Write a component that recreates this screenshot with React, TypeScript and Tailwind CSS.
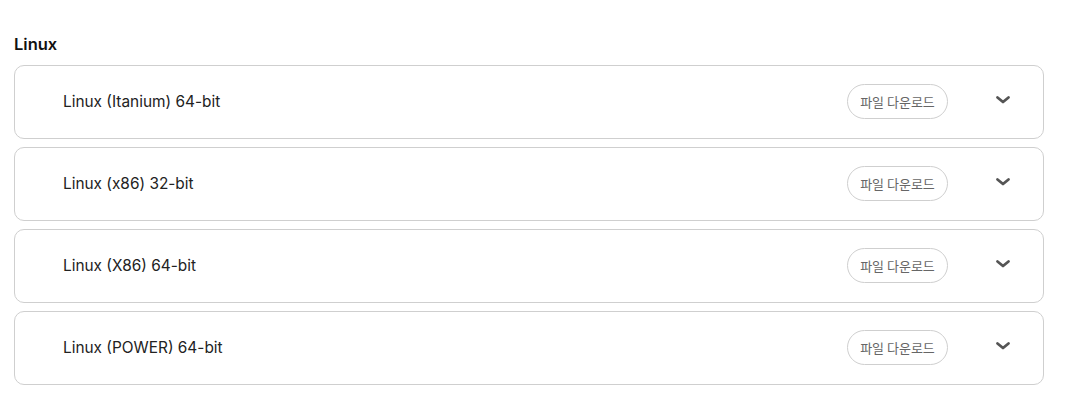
import React from "react";

const items = [
  "Linux (Itanium) 64-bit",
  "Linux (x86) 32-bit",
  "Linux (X86) 64-bit",
  "Linux (POWER) 64-bit",
];

const Chevron = () => (
  <svg width="16" height="16" viewBox="0 0 16 16" fill="none" stroke="#555" strokeWidth="2.8" strokeLinecap="round" strokeLinejoin="round">
    <path d="M2.5 5.5l5.5 4.5 5.5-4.5" />
  </svg>
);

const App = () => {
  return (
    <div className="w-[1072px] h-[407px] bg-white px-[14px] pt-[33px] font-['Inter','Noto_Sans_CJK_KR',sans-serif]">
      <h2 className="text-[16.5px] font-semibold text-[#111] leading-[22px] mb-[10px]">Linux</h2>
      <div className="flex flex-col gap-[8px] w-[1030px]">
        {items.map((name) => (
          <div
            key={name}
            className="h-[74px] border border-[#cfcfcf] rounded-[10px] flex items-center pl-[48px] pr-[32px]"
          >
            <span className="flex-1 text-[15.4px] text-[#222] leading-[20px] -mt-[1px]">{name}</span>
            <button className="h-[35px] w-[101px] rounded-full border border-[#cfcfcf] text-[13px] text-[#666] font-['Noto_Sans_CJK_KR',sans-serif] -mt-[1px]">
              파일 다운로드
            </button>
            <div className="ml-[47px] -mt-[4px]">
              <Chevron />
            </div>
          </div>
        ))}
      </div>
    </div>
  );
};

export default App;
